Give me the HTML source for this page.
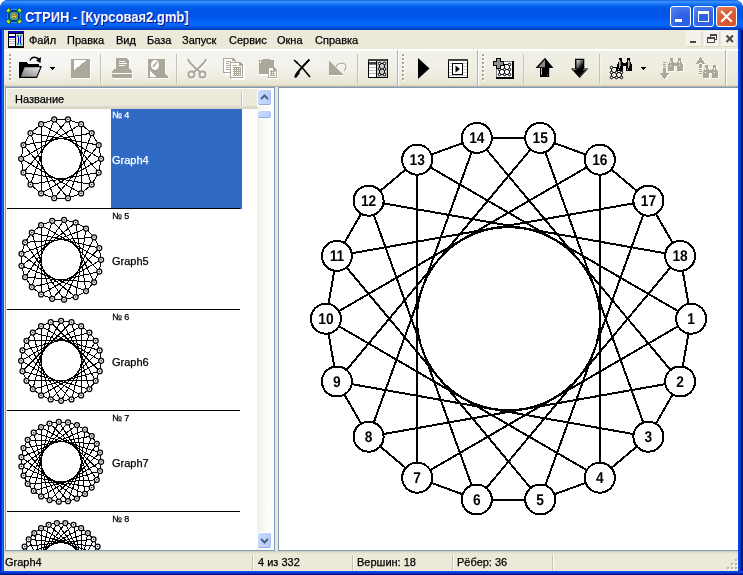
<!DOCTYPE html>
<html><head><meta charset="utf-8">
<style>
*{margin:0;padding:0;box-sizing:border-box}
html,body{width:743px;height:575px;overflow:hidden;background:#fff}
body{position:relative;font-family:"Liberation Sans",sans-serif;font-size:11px;color:#000}
.abs{position:absolute}
.mi,.st,.nm,.num,.ht,#titletext{will-change:transform}
.mi,.st,.nm,.num,.ht{-webkit-text-stroke:0.25px currentColor}
#right svg{will-change:transform}
#win{position:absolute;left:0;top:0;width:743px;height:575px;background:#0831d9;border-radius:8px 8px 0 0;overflow:hidden}
#title{position:absolute;left:0;top:0;width:743px;height:30px;border-radius:8px 8px 0 0;
background:linear-gradient(to bottom,#0a5ae0 0px,#2f86f6 1px,#3b90fa 2px,#1f7af4 3.5px,#0d6cf2 5px,#0360ee 6px,#0058e8 8px,#0055e5 12px,#0056e8 17px,#035ef2 20px,#0668fc 23px,#0565f8 25px,#045cec 26.5px,#0350dc 27.5px,#0242c8 28.5px,#0138b4 30px)}
#titletext{position:absolute;left:25px;top:9px;color:#fff;font-weight:bold;font-size:14.5px;transform:scaleX(0.897);transform-origin:0 0;text-shadow:1px 1px #0f1089;white-space:nowrap}
#client{position:absolute;left:4px;top:30px;width:734px;height:541px;background:#ece9d8}
#bl{position:absolute;left:0;top:30px;width:4px;height:545px;background:linear-gradient(to right,#0019cf 0,#0019cf 1px,#0831d9 1px,#0831d9 2px,#166aee 2px,#166aee 3px,#0855dd 3px)}
#br{position:absolute;left:738px;top:30px;width:5px;height:545px;background:linear-gradient(to right,#0a48ea 0,#0a48ea 1px,#0643dc 1px,#0643dc 2px,#0230b8 2px,#0230b8 3px,#00138c 3px)}
#bb{position:absolute;left:0;top:571px;width:743px;height:4px;background:linear-gradient(to bottom,#0a48ea 0,#0a48ea 1px,#0640d8 1px,#0640d8 2px,#0028b0 2px,#0028b0 3px,#001590 3px)}
#menubar{position:absolute;left:0;top:0;width:734px;height:20px;background:#ece9d8}
.mi{position:absolute;top:4px;font-size:11px;white-space:nowrap}
#toolbar{position:absolute;left:0;top:21px;width:734px;height:36px;background:linear-gradient(to bottom,#f0efe4 0px,#efede0 18px,#ebe7d6 29px,#e8e4d1 33px,#e2decb 34px,#dad5c1 35px,#b6af9a 35px,#b6af9a 36px)}
#tbov{position:absolute;left:0;top:0;width:734px;height:36px;background:linear-gradient(to right,rgba(247,247,248,0.85) 0%,rgba(247,247,248,0.42) 45%,rgba(247,247,248,0) 85%);-webkit-mask-image:linear-gradient(to bottom,#000 0%,#000 35%,rgba(0,0,0,0.25) 85%,rgba(0,0,0,0) 100%);mask-image:linear-gradient(to bottom,#000 0%,#000 35%,rgba(0,0,0,0.25) 85%,rgba(0,0,0,0) 100%)}
#mline{position:absolute;left:0;top:19px;width:734px;height:2px;background:#fff}
.sep{position:absolute;top:3px;width:2px;height:30px;border-left:1px solid #c5c2b2;border-right:1px solid rgba(255,255,255,0.35)}
.band{position:absolute;top:-1px;width:2px;height:36px;border-left:1px solid #b5b19e;border-right:1px solid #fff}
.cb{position:absolute;top:6px;width:21px;height:21px;border:1px solid #fff;border-radius:3px;background:radial-gradient(circle at 70% 80%,#2a5fe8 0%,#2f63e6 40%,#5a86f0 100%);box-shadow:inset 0 0 0 0 #fff}
.cb.cx{background:radial-gradient(circle at 70% 80%,#d8542c 0%,#dc5a35 50%,#e88a6a 100%)}
.mb{position:absolute;top:1px;width:16px;height:16px;background:#f4f2e8;border:1px solid #f8f7f1;border-right-color:#dcd9c9;border-bottom-color:#dcd9c9}
.sb{position:absolute;background:linear-gradient(to right,#c9d9fd 0%,#c1d3fc 60%,#b8cbf8 100%);border-radius:2px;border-bottom:1px solid #8fa9e0;border-right:1px solid #a9bff2;box-shadow:0 0 0 1px #fff}
.grip{position:absolute;top:3px;width:3px;height:27px;background:repeating-linear-gradient(to bottom,#aaa796 0,#aaa796 2px,transparent 2px,transparent 4px) 0 0/2px 26px no-repeat,repeating-linear-gradient(to bottom,#fff 0,#fff 2px,transparent 2px,transparent 4px) 1px 1px/2px 26px no-repeat}
#left{position:absolute;left:1px;top:57px;width:270px;height:464px;border:1px solid #7f9db9;background:#fff}
#right{position:absolute;left:274px;top:57px;width:460px;height:464px;border:1px solid #7f9db9;border-right:none;background:#fff}
#hdr{position:absolute;left:1px;top:1px;width:250px;height:20px;background:linear-gradient(to bottom,#ebeadb 0%,#ebeadb 80%,#e0ddcd 88%,#d1cfbe 100%)}
#status{position:absolute;left:0;top:521px;width:734px;height:20px;background:linear-gradient(to bottom,#c9c6b4 0,#dcd9c7 1px,#e6e3d2 2px,#ebe8d7 3px,#ece9d8 4px)}
.st{position:absolute;top:5px;font-size:11px;white-space:nowrap}
.ssep{position:absolute;top:4px;width:2px;height:15px;border-left:1px solid #c5c2b2;border-right:1px solid #fff}
.item{position:absolute;left:1px;width:235px;height:101px}
.item .line{position:absolute;left:0;bottom:0;width:233px;height:1px;background:#000}
.item .num{position:absolute;left:105px;top:2px;font-size:9px;white-space:nowrap}
.item .nm{position:absolute;left:105px;top:46px;font-size:11px;white-space:nowrap}
.sel{position:absolute;left:104px;top:0;width:131px;height:101px;background:#316ac5}
svg{position:absolute;overflow:visible}
svg text{font-family:"Liberation Sans",sans-serif;font-weight:bold;font-size:16px;text-rendering:geometricPrecision}
</style></head><body>
<div id="win">
<div id="title">
<svg width="16" height="16" style="left:6px;top:8px" viewBox="0 0 16 16">
<path d="M5 1.500h6l3.500 3.500v6l-3.500 3.500h-6l-3.500 -3.500v-6z" fill="#1830b0" stroke="#18a0c0" stroke-width="0.900"/>
<path d="M5.700 3.500h4.600l2.200 2.200v4.600l-2.200 2.200h-4.600l-2.200 -2.200v-4.600z" fill="#20b8c8" stroke="#0c1c80" stroke-width="0.800"/>
<circle cx="8" cy="8" r="3" fill="#e0c848" stroke="#6a5a18" stroke-width="0.700"/>
<rect x="6.500" y="6.600" width="1" height="1.200" fill="#303020"/><rect x="8.600" y="6.600" width="1" height="1.200" fill="#303020"/><rect x="7.200" y="9" width="1.700" height="1" fill="#705020"/>
<g transform="translate(2.700 2.700)"><path d="M0 -2.700L2.700 0L0 2.700L-2.700 0z" fill="#28e038" stroke="#202808" stroke-width="0.800"/><path d="M0 -2.300L-2.300 0L-1.150 1.150L1.150 -1.150z" fill="#f0e050"/></g><g transform="translate(13.300 2.700) rotate(90)"><path d="M0 -2.700L2.700 0L0 2.700L-2.700 0z" fill="#28e038" stroke="#202808" stroke-width="0.800"/><path d="M0 -2.300L-2.300 0L-1.150 1.150L1.150 -1.150z" fill="#f0e050"/></g><g transform="translate(13.300 13.300) rotate(180)"><path d="M0 -2.700L2.700 0L0 2.700L-2.700 0z" fill="#28e038" stroke="#202808" stroke-width="0.800"/><path d="M0 -2.300L-2.300 0L-1.150 1.150L1.150 -1.150z" fill="#f0e050"/></g><g transform="translate(2.700 13.300) rotate(270)"><path d="M0 -2.700L2.700 0L0 2.700L-2.700 0z" fill="#28e038" stroke="#202808" stroke-width="0.800"/><path d="M0 -2.300L-2.300 0L-1.150 1.150L1.150 -1.150z" fill="#f0e050"/></g>
</svg>

<div id="titletext">СТРИН - [Курсовая2.gmb]</div>
<div class="cb" style="left:670px"><div class="abs" style="left:4px;top:12px;width:7px;height:3px;background:#fff"></div></div>
<div class="cb" style="left:693px"><div class="abs" style="left:4px;top:4px;width:11px;height:11px;border:1px solid #fff;border-top:3px solid #fff"></div></div>
<div class="cb cx" style="left:716px"><svg width="19" height="19" style="left:0;top:0"><path d="M5 5l9 9M14 5l-9 9" stroke="#fff" stroke-width="2.200" stroke-linecap="square"/></svg></div>

</div>
<div id="bl"></div><div id="br"></div>
<div id="client">
<div id="menubar">
<svg width="16" height="17" style="left:4px;top:1px" viewBox="0 0 16 17" shape-rendering="crispEdges">
<rect x="0" y="0" width="16" height="17" fill="#000"/>
<rect x="0" y="0" width="16" height="2" fill="#0000c0"/>
<rect x="1" y="3" width="6" height="12" fill="#fff"/>
<rect x="1" y="5" width="6" height="2" fill="#0000c0"/>
<path d="M1 8h6v1h-6zM1 10h6v1h-6zM1 12h6v1h-6z" fill="#c0c0c0"/>
<rect x="8" y="3" width="7" height="12" fill="#e0dcc8"/>
<rect x="10" y="5" width="1" height="8" fill="#0000c0"/><rect x="12" y="5" width="1" height="8" fill="#0000c0"/>
<rect x="9" y="4" width="5" height="2" fill="#00a0c0"/><rect x="9" y="12" width="5" height="2" fill="#00a0c0"/>
<rect x="11" y="4" width="1" height="2" fill="#e0dcc8"/><rect x="11" y="12" width="1" height="2" fill="#e0dcc8"/>
</svg>

<div class="mi" style="left:25px">Файл</div>
<div class="mi" style="left:63px">Правка</div>
<div class="mi" style="left:112px">Вид</div>
<div class="mi" style="left:143px">База</div>
<div class="mi" style="left:178px">Запуск</div>
<div class="mi" style="left:225px">Сервис</div>
<div class="mi" style="left:273px">Окна</div>
<div class="mi" style="left:311px">Справка</div>
<div class="mb" style="left:682px"><div class="abs" style="left:3px;top:9px;width:6px;height:2px;background:#484848"></div></div>
<div class="mb" style="left:700px"><div class="abs" style="left:5px;top:2px;width:7px;height:6px;border:1px solid #484848;border-top-width:2px"></div><div class="abs" style="left:2px;top:5px;width:8px;height:6px;border:1px solid #484848;border-top-width:2px;background:#f4f2e8"></div></div>
<div class="mb" style="left:718px"><svg width="16" height="16" style="left:-1px;top:-1px"><path d="M4.500 4.500l6.500 6.500M11 4.500l-6.500 6.500" stroke="#484848" stroke-width="2"/></svg></div>

</div>
<div id="mline"></div>
<div id="toolbar">
<div id="tbov"></div>
<div class="grip" style="left:5px"></div>
<div class="sep" style="left:96px"></div>
<div class="sep" style="left:172px"></div>
<div class="sep" style="left:353px"></div>
<div class="band" style="left:393px"></div>
<div class="grip" style="left:398px"></div>
<div class="band" style="left:473px"></div>
<div class="grip" style="left:478px"></div>
<div class="sep" style="left:519px"></div>
<div class="sep" style="left:595px"></div>
<div class="band" style="left:721px"></div>
<svg width="735" height="36" style="left:0;top:0" viewBox="4 51 735 36">
<g shape-rendering="crispEdges">
<!-- open folder -->
<defs><linearGradient id="fg" x1="0" y1="1" x2="1" y2="0"><stop offset="0" stop-color="#7c7c7c"/><stop offset="0.5" stop-color="#b4b4b4"/><stop offset="1" stop-color="#ececec"/></linearGradient></defs>
<path d="M19 62h7l2 2h11v3h-15l-4 11h-1z" fill="#000"/>
<path d="M23.500 66h18.500l-5 12H19z" fill="#000" shape-rendering="auto"/>
<path d="M24.700 67.300h15.500l-3.800 9.500H20.800z" fill="url(#fg)" shape-rendering="auto"/>
<path d="M30 60.500c1.500-4 6.500-4.500 9.500-0.500" fill="none" stroke="#000" stroke-width="1.300" shape-rendering="auto"/>
<path d="M36 60.500l5-3.500l-0.500 6z" fill="#000" shape-rendering="auto"/>
<path d="M50 67h5v1h-5zM51 68h3v1h-3zM52 69h1v1h-1z" fill="#000"/>
<!-- save disabled -->
<rect x="72" y="60" width="19" height="19" fill="#fff"/>
<rect x="71" y="59" width="19" height="19" fill="#aca899"/>
<path d="M74 60h13l-13 10z" fill="#fff"/>
<!-- print disabled -->
<g fill="#fff" transform="translate(1,1)"><path d="M116 58h10l3 3v8h-13zM114 69h17l1 3v1h-20v-1zM112 74h20v3l-1 1h-18l-1-1z"/></g>
<path d="M116 58h10l3 3v8h-13z" fill="#aca899"/>
<path d="M119 61h6v1h-6zM119 63h8v1h-8zM119 65h6v1h-6z" fill="#fff"/>
<path d="M114 69h17l1 3v1h-20v-1zM112 74h20v3l-1 1h-18l-1-1z" fill="#aca899"/>
<!-- preview disabled -->
<g fill="#fff" transform="translate(1,1)"><path d="M148 59h17v14l3 4v1h-20z"/></g>
<path d="M148 59h17v14l3 4v1h-20z" fill="#aca899"/>
<ellipse cx="155" cy="65" rx="4" ry="5" fill="#fff" shape-rendering="auto"/>
<path d="M153 67l4-5" stroke="#aca899" stroke-width="1.6" shape-rendering="auto"/>
<path d="M150 70l6 7h-6z" fill="#fff"/>
</g>
<!-- scissors disabled -->
<g shape-rendering="auto" fill="none">
<g stroke="#fff" transform="translate(1,1)" stroke-width="2"><path d="M188 59c1 4 6 8 12 13M206 59c-1 4-6 8-12 13"/><ellipse cx="191.500" cy="74.500" rx="3" ry="3"/><ellipse cx="202.500" cy="74.500" rx="3" ry="3"/></g>
<g stroke="#aca899" stroke-width="2"><path d="M188 59c1 4 6 8 12 13M206 59c-1 4-6 8-12 13"/><ellipse cx="191.500" cy="74.500" rx="3" ry="3"/><ellipse cx="202.500" cy="74.500" rx="3" ry="3"/></g>
</g>
<g shape-rendering="crispEdges">
<!-- copy disabled -->
<path d="M224 59h10l3 3v12h-13z" fill="#fff" transform="translate(1,1)"/>
<path d="M231 63h10l3 3v13h-13z" fill="#fff" transform="translate(1,1)"/>
<path d="M223 58h10l3 3v12h-13z" fill="#aca899"/>
<path d="M224 59h8v2h3v11h-11z" fill="#fff"/>
<path d="M226 61h5v1h-5zM226 63h3v1h-3zM226 65h4v1h-4zM226 67h3v1h-3zM226 69h4v1h-4z" fill="#aca899"/>
<path d="M230 62h10l3 3v13h-13z" fill="#aca899"/>
<path d="M231 63h8v3h3v11h-11z" fill="#fff"/>
<path d="M233 65h4v1h-4zM233 67h8v1h-8zM233 69h8v1h-8zM233 71h8v1h-8zM233 73h8v1h-8zM233 75h8v1h-8z" fill="#aca899"/>
<path d="M234 67h1v9h-1zM236 67h1v9h-1zM238 67h1v9h-1zM240 67h1v9h-1z" fill="#aca899"/>
<!-- paste disabled -->
<path d="M259 61h15v14h-15z" fill="#fff" transform="translate(1,1)"/>
<path d="M259 60h4v-1h7v1h4v14h-15z" fill="#aca899"/>
<path d="M260 61h1v2h-1z" fill="#fff"/>
<path d="M268 67h7l3 3v9h-10z" fill="#fff"/>
<path d="M268 67h6l3 3v8h-9z" fill="#aca899"/>
<path d="M269 68h4v3h3v6h-7z" fill="#fff"/>
<path d="M270 71h5v1h-5zM270 73h5v1h-5zM270 75h5v1h-5zM271 70h1v6h-1zM273 71h1v5h-1z" fill="#aca899"/>
</g>
<!-- delete X -->
<g shape-rendering="auto">
<path d="M294 60c5 4 11 10 16 17" stroke="#000" stroke-width="1.6" fill="none"/>
<path d="M309.500 59.500c-5 5-10 10-14 16" stroke="#000" stroke-width="2" fill="none"/>
<path d="M298 71l-4 6 2 1 4-5z" fill="#000"/>
<path d="M294 60l4 2-1 2z" fill="#000"/>
</g>
<!-- undo disabled -->
<g shape-rendering="crispEdges">
<path d="M330 62l14 14h-14z" fill="#fff"/>
<path d="M329 61l14 14h-14z" fill="#aca899"/>
</g>
<path d="M336 67c2-5 10-5 10 0c0 2-1 3-2 4" stroke="#fff" stroke-width="1.2" fill="none" transform="translate(1,1)"/>
<path d="M336 67c2-5 10-5 10 0c0 2-1 3-2 4" stroke="#aca899" stroke-width="1.200" fill="none"/>
<g shape-rendering="crispEdges">
<!-- table/graph icon -->
<rect x="368" y="59" width="20" height="19" fill="#000"/>
<rect x="368" y="59" width="19" height="2" fill="#404040"/>
<rect x="369" y="61" width="7" height="16" fill="#fff"/>
<rect x="369" y="62" width="7" height="2" fill="#404040"/>
<rect x="369" y="64" width="7" height="1" fill="#808080"/>
<path d="M369 67h7v1h-7zM369 70h7v1h-7zM369 73h7v1h-7z" fill="#c0c0c0"/>
<rect x="377" y="61" width="10" height="16" fill="#c8c8c8"/>
</g>
<g stroke="#000" stroke-width="1" fill="#fff"><path d="M379.500 63.500h5v11h-5zM379.500 69h5" fill="none"/><circle cx="379.500" cy="63.500" r="1.300"/><circle cx="384.500" cy="63.500" r="1.300"/><circle cx="379.500" cy="69" r="1.300"/><circle cx="384.500" cy="69" r="1.300"/><circle cx="379.500" cy="74.500" r="1.300"/><circle cx="384.500" cy="74.500" r="1.300"/></g>
<!-- play -->
<path d="M418 58v21l11.500-10.500z" fill="#000"/>
<g shape-rendering="crispEdges">
<!-- run window -->
<rect x="448" y="59" width="20" height="19" fill="#000"/>
<rect x="448" y="59" width="20" height="2" fill="#404040"/>
<rect x="449" y="61" width="18" height="16" fill="#fff"/>
<path d="M449 63h18v1h-18zM449 66h18v1h-18zM449 69h18v1h-18zM449 72h18v1h-18zM449 75h18v1h-18z" fill="#c8c8c8"/>
<rect x="452" y="63" width="11" height="12" fill="#000"/>
<rect x="453" y="64" width="9" height="10" fill="#fff"/>
<path d="M455.500 65.500v7l4.500-3.500z" fill="#000" shape-rendering="auto"/>
<!-- add graph -->
<rect x="496" y="61" width="18" height="18" fill="#000"/>
<rect x="496" y="61" width="16" height="16" fill="#fff"/>
<rect x="496" y="61" width="1" height="16" fill="#808080"/><rect x="496" y="61" width="16" height="1" fill="#808080"/>
</g>
<g stroke="#000" stroke-width="1" fill="#fff"><path d="M499.500 64.500h10v10h-10zM504.500 64.500v10M499.500 69.500h10" fill="none"/>
<circle cx="509.500" cy="64.500" r="1.300"/><circle cx="509.500" cy="69.500" r="1.300"/><circle cx="499.500" cy="74.500" r="1.300"/><circle cx="504.500" cy="74.500" r="1.300"/><circle cx="509.500" cy="74.500" r="1.300"/><circle cx="504.500" cy="69.500" r="1.300"/><circle cx="499.500" cy="69.500" r="1.300"/></g>
<path d="M496.500 58.500h4v3h3v4h-3v3h-4v-3h-3v-4h3z" fill="#909088" stroke="#000" stroke-width="1" shape-rendering="crispEdges"/>
<!-- up arrow -->
<path d="M545 57.800l8.500 10.200h-4.300v9h-9.200v-9h-4.500z" fill="#000"/>
<path d="M545 59.500l-6.800 7.700h6.800z" fill="#868686"/>
<path d="M541.500 68v7" stroke="#b0b0b0" stroke-width="1" fill="none"/>
<rect x="547" y="74.500" width="1" height="1" fill="#999"/>
<!-- down arrow -->
<defs><linearGradient id="dg" x1="0" y1="0" x2="1" y2="1"><stop offset="0" stop-color="#e8e8e8"/><stop offset="0.45" stop-color="#707070"/><stop offset="0.8" stop-color="#000"/></linearGradient></defs>
<path d="M575 58.800h9.300v9.700h4l-8.700 9.500l-8.700-9.500h4.100z" fill="#000"/>
<rect x="576.500" y="60" width="6.500" height="8.500" fill="url(#dg)"/>
<path d="M573 69.700h3.500M583 69.700h3.500" stroke="#9a9a9a" stroke-width="0.900" fill="none"/>
<path d="M585 71l-5 5.500" stroke="#666" stroke-width="0.800" fill="none"/>
<!-- binoculars -->
<g stroke="#000" stroke-width="1" fill="#fff"><path d="M611.500 67.500h10v10h-10zM611.500 72.500h10M616.500 67.500v10" fill="none"/><circle cx="611.500" cy="67.500" r="1.300"/><circle cx="611.500" cy="72.500" r="1.300"/><circle cx="611.500" cy="77.500" r="1.300"/><circle cx="616.500" cy="77.500" r="1.300"/><circle cx="621.500" cy="77.500" r="1.300"/><circle cx="621.500" cy="72.500" r="1.300"/><circle cx="616.500" cy="72.500" r="1.300"/></g>
<g shape-rendering="crispEdges"><path transform="translate(617 58)" d="M2 0h3v4h1v9h-6v-7h1v-2h1zM13 0h-3v4h-1v9h6v-7h-1v-2h-1zM6 5h3v3h-3z" fill="#000"/><path d="M619 60h1v8h-1zM628 60h1v8h-1z" fill="#b8b8b8"/><path d="M620 61h1v5h-1zM629 61h1v5h-1z" fill="#707070"/><path d="M618 69h1v1h-1zM627 69h1v1h-1z" fill="#ddd"/></g>
<path d="M641 67h5v1h-5zM642 68h3v1h-3zM643 69h1v1h-1z" fill="#000" shape-rendering="crispEdges"/>
<!-- find down disabled -->
<g shape-rendering="crispEdges">
<path transform="translate(669 59)" d="M2 0h3v4h1v9h-6v-7h1v-2h1zM13 0h-3v4h-1v9h6v-7h-1v-2h-1zM6 5h3v3h-3z" fill="#fff"/>
<path transform="translate(668 58)" d="M2 0h3v4h1v9h-6v-7h1v-2h1zM13 0h-3v4h-1v9h6v-7h-1v-2h-1zM6 5h3v3h-3z" fill="#aca899"/>
<path d="M670 61h1v2h-1zM679 61h1v2h-1zM670 65h1v1h-1zM679 65h1v1h-1z" fill="#fff"/>
<g fill="#fff" transform="translate(1,1)"><path d="M663 68h3v5h-3zM660 73h9l-4.500 6.500z"/></g>
<g fill="#aca899"><path d="M663 68h3v5h-3zM663 66h3v1h-3zM663 64h3v1h-3zM663 62h3v1h-3zM660 73h9l-4.500 6.500z"/></g>
<!-- find up disabled -->
<path transform="translate(704 66)" d="M2 0h3v4h1v9h-6v-7h1v-2h1zM13 0h-3v4h-1v9h6v-7h-1v-2h-1zM6 5h3v3h-3z" fill="#fff"/>
<path transform="translate(703 65)" d="M2 0h3v4h1v9h-6v-7h1v-2h1zM13 0h-3v4h-1v9h6v-7h-1v-2h-1zM6 5h3v3h-3z" fill="#aca899"/>
<path d="M705 68h1v2h-1zM714 68h1v2h-1zM705 72h1v1h-1zM714 72h1v1h-1z" fill="#fff"/>
<g fill="#fff" transform="translate(1,1)"><path d="M699 63h3v5h-3zM696 63.500h9l-4.500-6.500z"/></g>
<g fill="#aca899"><path d="M699 63h3v5h-3zM699 69h3v1h-3zM699 71h3v1h-3zM699 73h3v1h-3zM696 63.500h9l-4.500-6.500z"/></g>
</g>
</svg>

</div>
<div id="left">
<div id="hdr"><div class="abs ht" style="left:8px;top:4px;font-size:11px">Название</div>
<div class="abs" style="left:234px;top:3px;width:2px;height:14px;border-left:1px solid #c5c2b2;border-right:1px solid #fff"></div></div>
<div class="abs" id="list" style="left:0;top:21px;width:251px;height:441px;overflow:hidden">
<div class="item" style="top:-1px"><div class="sel"></div><svg width="104" height="100" style="left:0;top:0" shape-rendering="crispEdges"><path d="M94.1 50.8L91.7 64.5M94.1 50.8L34.1 85.4M91.7 64.5L84.7 76.5M91.7 64.5L23.5 76.5M84.7 76.5L74.1 85.4M84.7 76.5L16.5 64.5M74.1 85.4L61.0 90.2M74.1 85.4L14.1 50.8M61.0 90.2L47.2 90.2M61.0 90.2L16.5 37.1M47.2 90.2L34.1 85.4M47.2 90.2L23.5 25.1M34.1 85.4L23.5 76.5M34.1 85.4L34.1 16.2M23.5 76.5L16.5 64.5M23.5 76.5L47.2 11.4M16.5 64.5L14.1 50.8M16.5 64.5L61.0 11.4M14.1 50.8L16.5 37.1M14.1 50.8L74.1 16.2M16.5 37.1L23.5 25.1M16.5 37.1L84.7 25.1M23.5 25.1L34.1 16.2M23.5 25.1L91.7 37.1M34.1 16.2L47.2 11.4M34.1 16.2L94.1 50.8M47.2 11.4L61.0 11.4M47.2 11.4L91.7 64.5M61.0 11.4L74.1 16.2M61.0 11.4L84.7 76.5M74.1 16.2L84.7 25.1M74.1 16.2L74.1 85.4M84.7 25.1L91.7 37.1M84.7 25.1L61.0 90.2M91.7 37.1L94.1 50.8M91.7 37.1L47.2 90.2" stroke="#000" stroke-width="1" fill="none"/>
<circle cx="54.1" cy="50.8" r="20.2" stroke="#000" stroke-width="1" fill="none"/>
<circle cx="94.1" cy="50.8" r="2.5" stroke="#000" stroke-width="1.25" fill="#fff" shape-rendering="geometricPrecision"/>
<circle cx="94.1" cy="50.8" r="0.8" fill="#333" shape-rendering="geometricPrecision"/>
<circle cx="91.7" cy="64.5" r="2.5" stroke="#000" stroke-width="1.25" fill="#fff" shape-rendering="geometricPrecision"/>
<circle cx="91.7" cy="64.5" r="0.8" fill="#333" shape-rendering="geometricPrecision"/>
<circle cx="84.7" cy="76.5" r="2.5" stroke="#000" stroke-width="1.25" fill="#fff" shape-rendering="geometricPrecision"/>
<circle cx="84.7" cy="76.5" r="0.8" fill="#333" shape-rendering="geometricPrecision"/>
<circle cx="74.1" cy="85.4" r="2.5" stroke="#000" stroke-width="1.25" fill="#fff" shape-rendering="geometricPrecision"/>
<circle cx="74.1" cy="85.4" r="0.8" fill="#333" shape-rendering="geometricPrecision"/>
<circle cx="61.0" cy="90.2" r="2.5" stroke="#000" stroke-width="1.25" fill="#fff" shape-rendering="geometricPrecision"/>
<circle cx="61.0" cy="90.2" r="0.8" fill="#333" shape-rendering="geometricPrecision"/>
<circle cx="47.2" cy="90.2" r="2.5" stroke="#000" stroke-width="1.25" fill="#fff" shape-rendering="geometricPrecision"/>
<circle cx="47.2" cy="90.2" r="0.8" fill="#333" shape-rendering="geometricPrecision"/>
<circle cx="34.1" cy="85.4" r="2.5" stroke="#000" stroke-width="1.25" fill="#fff" shape-rendering="geometricPrecision"/>
<circle cx="34.1" cy="85.4" r="0.8" fill="#333" shape-rendering="geometricPrecision"/>
<circle cx="23.5" cy="76.5" r="2.5" stroke="#000" stroke-width="1.25" fill="#fff" shape-rendering="geometricPrecision"/>
<circle cx="23.5" cy="76.5" r="0.8" fill="#333" shape-rendering="geometricPrecision"/>
<circle cx="16.5" cy="64.5" r="2.5" stroke="#000" stroke-width="1.25" fill="#fff" shape-rendering="geometricPrecision"/>
<circle cx="16.5" cy="64.5" r="0.8" fill="#333" shape-rendering="geometricPrecision"/>
<circle cx="14.1" cy="50.8" r="2.5" stroke="#000" stroke-width="1.25" fill="#fff" shape-rendering="geometricPrecision"/>
<circle cx="14.1" cy="50.8" r="0.8" fill="#333" shape-rendering="geometricPrecision"/>
<circle cx="16.5" cy="37.1" r="2.5" stroke="#000" stroke-width="1.25" fill="#fff" shape-rendering="geometricPrecision"/>
<circle cx="16.5" cy="37.1" r="0.8" fill="#333" shape-rendering="geometricPrecision"/>
<circle cx="23.5" cy="25.1" r="2.5" stroke="#000" stroke-width="1.25" fill="#fff" shape-rendering="geometricPrecision"/>
<circle cx="23.5" cy="25.1" r="0.8" fill="#333" shape-rendering="geometricPrecision"/>
<circle cx="34.1" cy="16.2" r="2.5" stroke="#000" stroke-width="1.25" fill="#fff" shape-rendering="geometricPrecision"/>
<circle cx="34.1" cy="16.2" r="0.8" fill="#333" shape-rendering="geometricPrecision"/>
<circle cx="47.2" cy="11.4" r="2.5" stroke="#000" stroke-width="1.25" fill="#fff" shape-rendering="geometricPrecision"/>
<circle cx="47.2" cy="11.4" r="0.8" fill="#333" shape-rendering="geometricPrecision"/>
<circle cx="61.0" cy="11.4" r="2.5" stroke="#000" stroke-width="1.25" fill="#fff" shape-rendering="geometricPrecision"/>
<circle cx="61.0" cy="11.4" r="0.8" fill="#333" shape-rendering="geometricPrecision"/>
<circle cx="74.1" cy="16.2" r="2.5" stroke="#000" stroke-width="1.25" fill="#fff" shape-rendering="geometricPrecision"/>
<circle cx="74.1" cy="16.2" r="0.8" fill="#333" shape-rendering="geometricPrecision"/>
<circle cx="84.7" cy="25.1" r="2.5" stroke="#000" stroke-width="1.25" fill="#fff" shape-rendering="geometricPrecision"/>
<circle cx="84.7" cy="25.1" r="0.8" fill="#333" shape-rendering="geometricPrecision"/>
<circle cx="91.7" cy="37.1" r="2.5" stroke="#000" stroke-width="1.25" fill="#fff" shape-rendering="geometricPrecision"/>
<circle cx="91.7" cy="37.1" r="0.8" fill="#333" shape-rendering="geometricPrecision"/></svg><div class="num" style="color:#fff">№ 4</div><div class="nm" style="color:#fff">Graph4</div><div class="line"></div></div>
<div class="item" style="top:100px"><svg width="104" height="100" style="left:0;top:0" shape-rendering="crispEdges"><path d="M94.1 50.8L92.3 62.6M94.1 50.8L34.1 85.4M92.3 62.6L87.1 73.3M92.3 62.6L24.8 78.0M87.1 73.3L79.0 82.1M87.1 73.3L18.1 68.2M79.0 82.1L68.7 88.0M79.0 82.1L14.5 56.8M68.7 88.0L57.1 90.7M68.7 88.0L14.5 44.8M57.1 90.7L45.2 89.8M57.1 90.7L18.1 33.4M45.2 89.8L34.1 85.4M45.2 89.8L24.8 23.6M34.1 85.4L24.8 78.0M34.1 85.4L34.1 16.2M24.8 78.0L18.1 68.2M24.8 78.0L45.2 11.8M18.1 68.2L14.5 56.8M18.1 68.2L57.1 10.9M14.5 56.8L14.5 44.8M14.5 56.8L68.7 13.6M14.5 44.8L18.1 33.4M14.5 44.8L79.0 19.5M18.1 33.4L24.8 23.6M18.1 33.4L87.1 28.3M24.8 23.6L34.1 16.2M24.8 23.6L92.3 39.0M34.1 16.2L45.2 11.8M34.1 16.2L94.1 50.8M45.2 11.8L57.1 10.9M45.2 11.8L92.3 62.6M57.1 10.9L68.7 13.6M57.1 10.9L87.1 73.3M68.7 13.6L79.0 19.5M68.7 13.6L79.0 82.1M79.0 19.5L87.1 28.3M79.0 19.5L68.7 88.0M87.1 28.3L92.3 39.0M87.1 28.3L57.1 90.7M92.3 39.0L94.1 50.8M92.3 39.0L45.2 89.8" stroke="#000" stroke-width="1" fill="none"/>
<circle cx="54.1" cy="50.8" r="20.2" stroke="#000" stroke-width="1" fill="none"/>
<circle cx="94.1" cy="50.8" r="2.5" stroke="#000" stroke-width="1.25" fill="#fff" shape-rendering="geometricPrecision"/>
<circle cx="94.1" cy="50.8" r="0.8" fill="#333" shape-rendering="geometricPrecision"/>
<circle cx="92.3" cy="62.6" r="2.5" stroke="#000" stroke-width="1.25" fill="#fff" shape-rendering="geometricPrecision"/>
<circle cx="92.3" cy="62.6" r="0.8" fill="#333" shape-rendering="geometricPrecision"/>
<circle cx="87.1" cy="73.3" r="2.5" stroke="#000" stroke-width="1.25" fill="#fff" shape-rendering="geometricPrecision"/>
<circle cx="87.1" cy="73.3" r="0.8" fill="#333" shape-rendering="geometricPrecision"/>
<circle cx="79.0" cy="82.1" r="2.5" stroke="#000" stroke-width="1.25" fill="#fff" shape-rendering="geometricPrecision"/>
<circle cx="79.0" cy="82.1" r="0.8" fill="#333" shape-rendering="geometricPrecision"/>
<circle cx="68.7" cy="88.0" r="2.5" stroke="#000" stroke-width="1.25" fill="#fff" shape-rendering="geometricPrecision"/>
<circle cx="68.7" cy="88.0" r="0.8" fill="#333" shape-rendering="geometricPrecision"/>
<circle cx="57.1" cy="90.7" r="2.5" stroke="#000" stroke-width="1.25" fill="#fff" shape-rendering="geometricPrecision"/>
<circle cx="57.1" cy="90.7" r="0.8" fill="#333" shape-rendering="geometricPrecision"/>
<circle cx="45.2" cy="89.8" r="2.5" stroke="#000" stroke-width="1.25" fill="#fff" shape-rendering="geometricPrecision"/>
<circle cx="45.2" cy="89.8" r="0.8" fill="#333" shape-rendering="geometricPrecision"/>
<circle cx="34.1" cy="85.4" r="2.5" stroke="#000" stroke-width="1.25" fill="#fff" shape-rendering="geometricPrecision"/>
<circle cx="34.1" cy="85.4" r="0.8" fill="#333" shape-rendering="geometricPrecision"/>
<circle cx="24.8" cy="78.0" r="2.5" stroke="#000" stroke-width="1.25" fill="#fff" shape-rendering="geometricPrecision"/>
<circle cx="24.8" cy="78.0" r="0.8" fill="#333" shape-rendering="geometricPrecision"/>
<circle cx="18.1" cy="68.2" r="2.5" stroke="#000" stroke-width="1.25" fill="#fff" shape-rendering="geometricPrecision"/>
<circle cx="18.1" cy="68.2" r="0.8" fill="#333" shape-rendering="geometricPrecision"/>
<circle cx="14.5" cy="56.8" r="2.5" stroke="#000" stroke-width="1.25" fill="#fff" shape-rendering="geometricPrecision"/>
<circle cx="14.5" cy="56.8" r="0.8" fill="#333" shape-rendering="geometricPrecision"/>
<circle cx="14.5" cy="44.8" r="2.5" stroke="#000" stroke-width="1.25" fill="#fff" shape-rendering="geometricPrecision"/>
<circle cx="14.5" cy="44.8" r="0.8" fill="#333" shape-rendering="geometricPrecision"/>
<circle cx="18.1" cy="33.4" r="2.5" stroke="#000" stroke-width="1.25" fill="#fff" shape-rendering="geometricPrecision"/>
<circle cx="18.1" cy="33.4" r="0.8" fill="#333" shape-rendering="geometricPrecision"/>
<circle cx="24.8" cy="23.6" r="2.5" stroke="#000" stroke-width="1.25" fill="#fff" shape-rendering="geometricPrecision"/>
<circle cx="24.8" cy="23.6" r="0.8" fill="#333" shape-rendering="geometricPrecision"/>
<circle cx="34.1" cy="16.2" r="2.5" stroke="#000" stroke-width="1.25" fill="#fff" shape-rendering="geometricPrecision"/>
<circle cx="34.1" cy="16.2" r="0.8" fill="#333" shape-rendering="geometricPrecision"/>
<circle cx="45.2" cy="11.8" r="2.5" stroke="#000" stroke-width="1.25" fill="#fff" shape-rendering="geometricPrecision"/>
<circle cx="45.2" cy="11.8" r="0.8" fill="#333" shape-rendering="geometricPrecision"/>
<circle cx="57.1" cy="10.9" r="2.5" stroke="#000" stroke-width="1.25" fill="#fff" shape-rendering="geometricPrecision"/>
<circle cx="57.1" cy="10.9" r="0.8" fill="#333" shape-rendering="geometricPrecision"/>
<circle cx="68.7" cy="13.6" r="2.5" stroke="#000" stroke-width="1.25" fill="#fff" shape-rendering="geometricPrecision"/>
<circle cx="68.7" cy="13.6" r="0.8" fill="#333" shape-rendering="geometricPrecision"/>
<circle cx="79.0" cy="19.5" r="2.5" stroke="#000" stroke-width="1.25" fill="#fff" shape-rendering="geometricPrecision"/>
<circle cx="79.0" cy="19.5" r="0.8" fill="#333" shape-rendering="geometricPrecision"/>
<circle cx="87.1" cy="28.3" r="2.5" stroke="#000" stroke-width="1.25" fill="#fff" shape-rendering="geometricPrecision"/>
<circle cx="87.1" cy="28.3" r="0.8" fill="#333" shape-rendering="geometricPrecision"/>
<circle cx="92.3" cy="39.0" r="2.5" stroke="#000" stroke-width="1.25" fill="#fff" shape-rendering="geometricPrecision"/>
<circle cx="92.3" cy="39.0" r="0.8" fill="#333" shape-rendering="geometricPrecision"/></svg><div class="num" style="">№ 5</div><div class="nm" style="">Graph5</div><div class="line"></div></div>
<div class="item" style="top:201px"><svg width="104" height="100" style="left:0;top:0" shape-rendering="crispEdges"><path d="M94.1 50.8L92.7 61.2M94.1 50.8L34.1 85.4M92.7 61.2L88.7 70.8M92.7 61.2L25.8 79.1M88.7 70.8L82.4 79.1M88.7 70.8L19.5 70.8M82.4 79.1L74.1 85.4M82.4 79.1L15.5 61.2M74.1 85.4L64.5 89.4M74.1 85.4L14.1 50.8M64.5 89.4L54.1 90.8M64.5 89.4L15.5 40.4M54.1 90.8L43.7 89.4M54.1 90.8L19.5 30.8M43.7 89.4L34.1 85.4M43.7 89.4L25.8 22.5M34.1 85.4L25.8 79.1M34.1 85.4L34.1 16.2M25.8 79.1L19.5 70.8M25.8 79.1L43.7 12.2M19.5 70.8L15.5 61.2M19.5 70.8L54.1 10.8M15.5 61.2L14.1 50.8M15.5 61.2L64.5 12.2M14.1 50.8L15.5 40.4M14.1 50.8L74.1 16.2M15.5 40.4L19.5 30.8M15.5 40.4L82.4 22.5M19.5 30.8L25.8 22.5M19.5 30.8L88.7 30.8M25.8 22.5L34.1 16.2M25.8 22.5L92.7 40.4M34.1 16.2L43.7 12.2M34.1 16.2L94.1 50.8M43.7 12.2L54.1 10.8M43.7 12.2L92.7 61.2M54.1 10.8L64.5 12.2M54.1 10.8L88.7 70.8M64.5 12.2L74.1 16.2M64.5 12.2L82.4 79.1M74.1 16.2L82.4 22.5M74.1 16.2L74.1 85.4M82.4 22.5L88.7 30.8M82.4 22.5L64.5 89.4M88.7 30.8L92.7 40.4M88.7 30.8L54.1 90.8M92.7 40.4L94.1 50.8M92.7 40.4L43.7 89.4" stroke="#000" stroke-width="1" fill="none"/>
<circle cx="54.1" cy="50.8" r="20.2" stroke="#000" stroke-width="1" fill="none"/>
<circle cx="94.1" cy="50.8" r="2.5" stroke="#000" stroke-width="1.25" fill="#fff" shape-rendering="geometricPrecision"/>
<circle cx="94.1" cy="50.8" r="0.8" fill="#333" shape-rendering="geometricPrecision"/>
<circle cx="92.7" cy="61.2" r="2.5" stroke="#000" stroke-width="1.25" fill="#fff" shape-rendering="geometricPrecision"/>
<circle cx="92.7" cy="61.2" r="0.8" fill="#333" shape-rendering="geometricPrecision"/>
<circle cx="88.7" cy="70.8" r="2.5" stroke="#000" stroke-width="1.25" fill="#fff" shape-rendering="geometricPrecision"/>
<circle cx="88.7" cy="70.8" r="0.8" fill="#333" shape-rendering="geometricPrecision"/>
<circle cx="82.4" cy="79.1" r="2.5" stroke="#000" stroke-width="1.25" fill="#fff" shape-rendering="geometricPrecision"/>
<circle cx="82.4" cy="79.1" r="0.8" fill="#333" shape-rendering="geometricPrecision"/>
<circle cx="74.1" cy="85.4" r="2.5" stroke="#000" stroke-width="1.25" fill="#fff" shape-rendering="geometricPrecision"/>
<circle cx="74.1" cy="85.4" r="0.8" fill="#333" shape-rendering="geometricPrecision"/>
<circle cx="64.5" cy="89.4" r="2.5" stroke="#000" stroke-width="1.25" fill="#fff" shape-rendering="geometricPrecision"/>
<circle cx="64.5" cy="89.4" r="0.8" fill="#333" shape-rendering="geometricPrecision"/>
<circle cx="54.1" cy="90.8" r="2.5" stroke="#000" stroke-width="1.25" fill="#fff" shape-rendering="geometricPrecision"/>
<circle cx="54.1" cy="90.8" r="0.8" fill="#333" shape-rendering="geometricPrecision"/>
<circle cx="43.7" cy="89.4" r="2.5" stroke="#000" stroke-width="1.25" fill="#fff" shape-rendering="geometricPrecision"/>
<circle cx="43.7" cy="89.4" r="0.8" fill="#333" shape-rendering="geometricPrecision"/>
<circle cx="34.1" cy="85.4" r="2.5" stroke="#000" stroke-width="1.25" fill="#fff" shape-rendering="geometricPrecision"/>
<circle cx="34.1" cy="85.4" r="0.8" fill="#333" shape-rendering="geometricPrecision"/>
<circle cx="25.8" cy="79.1" r="2.5" stroke="#000" stroke-width="1.25" fill="#fff" shape-rendering="geometricPrecision"/>
<circle cx="25.8" cy="79.1" r="0.8" fill="#333" shape-rendering="geometricPrecision"/>
<circle cx="19.5" cy="70.8" r="2.5" stroke="#000" stroke-width="1.25" fill="#fff" shape-rendering="geometricPrecision"/>
<circle cx="19.5" cy="70.8" r="0.8" fill="#333" shape-rendering="geometricPrecision"/>
<circle cx="15.5" cy="61.2" r="2.5" stroke="#000" stroke-width="1.25" fill="#fff" shape-rendering="geometricPrecision"/>
<circle cx="15.5" cy="61.2" r="0.8" fill="#333" shape-rendering="geometricPrecision"/>
<circle cx="14.1" cy="50.8" r="2.5" stroke="#000" stroke-width="1.25" fill="#fff" shape-rendering="geometricPrecision"/>
<circle cx="14.1" cy="50.8" r="0.8" fill="#333" shape-rendering="geometricPrecision"/>
<circle cx="15.5" cy="40.4" r="2.5" stroke="#000" stroke-width="1.25" fill="#fff" shape-rendering="geometricPrecision"/>
<circle cx="15.5" cy="40.4" r="0.8" fill="#333" shape-rendering="geometricPrecision"/>
<circle cx="19.5" cy="30.8" r="2.5" stroke="#000" stroke-width="1.25" fill="#fff" shape-rendering="geometricPrecision"/>
<circle cx="19.5" cy="30.8" r="0.8" fill="#333" shape-rendering="geometricPrecision"/>
<circle cx="25.8" cy="22.5" r="2.5" stroke="#000" stroke-width="1.25" fill="#fff" shape-rendering="geometricPrecision"/>
<circle cx="25.8" cy="22.5" r="0.8" fill="#333" shape-rendering="geometricPrecision"/>
<circle cx="34.1" cy="16.2" r="2.5" stroke="#000" stroke-width="1.25" fill="#fff" shape-rendering="geometricPrecision"/>
<circle cx="34.1" cy="16.2" r="0.8" fill="#333" shape-rendering="geometricPrecision"/>
<circle cx="43.7" cy="12.2" r="2.5" stroke="#000" stroke-width="1.25" fill="#fff" shape-rendering="geometricPrecision"/>
<circle cx="43.7" cy="12.2" r="0.8" fill="#333" shape-rendering="geometricPrecision"/>
<circle cx="54.1" cy="10.8" r="2.5" stroke="#000" stroke-width="1.25" fill="#fff" shape-rendering="geometricPrecision"/>
<circle cx="54.1" cy="10.8" r="0.8" fill="#333" shape-rendering="geometricPrecision"/>
<circle cx="64.5" cy="12.2" r="2.5" stroke="#000" stroke-width="1.25" fill="#fff" shape-rendering="geometricPrecision"/>
<circle cx="64.5" cy="12.2" r="0.8" fill="#333" shape-rendering="geometricPrecision"/>
<circle cx="74.1" cy="16.2" r="2.5" stroke="#000" stroke-width="1.25" fill="#fff" shape-rendering="geometricPrecision"/>
<circle cx="74.1" cy="16.2" r="0.8" fill="#333" shape-rendering="geometricPrecision"/>
<circle cx="82.4" cy="22.5" r="2.5" stroke="#000" stroke-width="1.25" fill="#fff" shape-rendering="geometricPrecision"/>
<circle cx="82.4" cy="22.5" r="0.8" fill="#333" shape-rendering="geometricPrecision"/>
<circle cx="88.7" cy="30.8" r="2.5" stroke="#000" stroke-width="1.25" fill="#fff" shape-rendering="geometricPrecision"/>
<circle cx="88.7" cy="30.8" r="0.8" fill="#333" shape-rendering="geometricPrecision"/>
<circle cx="92.7" cy="40.4" r="2.5" stroke="#000" stroke-width="1.25" fill="#fff" shape-rendering="geometricPrecision"/>
<circle cx="92.7" cy="40.4" r="0.8" fill="#333" shape-rendering="geometricPrecision"/></svg><div class="num" style="">№ 6</div><div class="nm" style="">Graph6</div><div class="line"></div></div>
<div class="item" style="top:302px"><svg width="104" height="100" style="left:0;top:0" shape-rendering="crispEdges"><path d="M94.1 50.8L93.0 60.0M94.1 50.8L34.1 85.4M93.0 60.0L89.8 68.8M93.0 60.0L26.7 79.9M89.8 68.8L84.7 76.5M89.8 68.8L20.7 72.8M84.7 76.5L78.0 82.9M84.7 76.5L16.5 64.5M78.0 82.9L69.9 87.5M78.0 82.9L14.4 55.4M69.9 87.5L61.0 90.2M69.9 87.5L14.4 46.2M61.0 90.2L51.8 90.7M61.0 90.2L16.5 37.1M51.8 90.7L42.6 89.1M51.8 90.7L20.7 28.8M42.6 89.1L34.1 85.4M42.6 89.1L26.7 21.7M34.1 85.4L26.7 79.9M34.1 85.4L34.1 16.2M26.7 79.9L20.7 72.8M26.7 79.9L42.6 12.5M20.7 72.8L16.5 64.5M20.7 72.8L51.8 10.9M16.5 64.5L14.4 55.4M16.5 64.5L61.0 11.4M14.4 55.4L14.4 46.2M14.4 55.4L69.9 14.1M14.4 46.2L16.5 37.1M14.4 46.2L78.0 18.7M16.5 37.1L20.7 28.8M16.5 37.1L84.7 25.1M20.7 28.8L26.7 21.7M20.7 28.8L89.8 32.8M26.7 21.7L34.1 16.2M26.7 21.7L93.0 41.6M34.1 16.2L42.6 12.5M34.1 16.2L94.1 50.8M42.6 12.5L51.8 10.9M42.6 12.5L93.0 60.0M51.8 10.9L61.0 11.4M51.8 10.9L89.8 68.8M61.0 11.4L69.9 14.1M61.0 11.4L84.7 76.5M69.9 14.1L78.0 18.7M69.9 14.1L78.0 82.9M78.0 18.7L84.7 25.1M78.0 18.7L69.9 87.5M84.7 25.1L89.8 32.8M84.7 25.1L61.0 90.2M89.8 32.8L93.0 41.6M89.8 32.8L51.8 90.7M93.0 41.6L94.1 50.8M93.0 41.6L42.6 89.1" stroke="#000" stroke-width="1" fill="none"/>
<circle cx="54.1" cy="50.8" r="20.2" stroke="#000" stroke-width="1" fill="none"/>
<circle cx="94.1" cy="50.8" r="2.5" stroke="#000" stroke-width="1.25" fill="#fff" shape-rendering="geometricPrecision"/>
<circle cx="94.1" cy="50.8" r="0.8" fill="#333" shape-rendering="geometricPrecision"/>
<circle cx="93.0" cy="60.0" r="2.5" stroke="#000" stroke-width="1.25" fill="#fff" shape-rendering="geometricPrecision"/>
<circle cx="93.0" cy="60.0" r="0.8" fill="#333" shape-rendering="geometricPrecision"/>
<circle cx="89.8" cy="68.8" r="2.5" stroke="#000" stroke-width="1.25" fill="#fff" shape-rendering="geometricPrecision"/>
<circle cx="89.8" cy="68.8" r="0.8" fill="#333" shape-rendering="geometricPrecision"/>
<circle cx="84.7" cy="76.5" r="2.5" stroke="#000" stroke-width="1.25" fill="#fff" shape-rendering="geometricPrecision"/>
<circle cx="84.7" cy="76.5" r="0.8" fill="#333" shape-rendering="geometricPrecision"/>
<circle cx="78.0" cy="82.9" r="2.5" stroke="#000" stroke-width="1.25" fill="#fff" shape-rendering="geometricPrecision"/>
<circle cx="78.0" cy="82.9" r="0.8" fill="#333" shape-rendering="geometricPrecision"/>
<circle cx="69.9" cy="87.5" r="2.5" stroke="#000" stroke-width="1.25" fill="#fff" shape-rendering="geometricPrecision"/>
<circle cx="69.9" cy="87.5" r="0.8" fill="#333" shape-rendering="geometricPrecision"/>
<circle cx="61.0" cy="90.2" r="2.5" stroke="#000" stroke-width="1.25" fill="#fff" shape-rendering="geometricPrecision"/>
<circle cx="61.0" cy="90.2" r="0.8" fill="#333" shape-rendering="geometricPrecision"/>
<circle cx="51.8" cy="90.7" r="2.5" stroke="#000" stroke-width="1.25" fill="#fff" shape-rendering="geometricPrecision"/>
<circle cx="51.8" cy="90.7" r="0.8" fill="#333" shape-rendering="geometricPrecision"/>
<circle cx="42.6" cy="89.1" r="2.5" stroke="#000" stroke-width="1.25" fill="#fff" shape-rendering="geometricPrecision"/>
<circle cx="42.6" cy="89.1" r="0.8" fill="#333" shape-rendering="geometricPrecision"/>
<circle cx="34.1" cy="85.4" r="2.5" stroke="#000" stroke-width="1.25" fill="#fff" shape-rendering="geometricPrecision"/>
<circle cx="34.1" cy="85.4" r="0.8" fill="#333" shape-rendering="geometricPrecision"/>
<circle cx="26.7" cy="79.9" r="2.5" stroke="#000" stroke-width="1.25" fill="#fff" shape-rendering="geometricPrecision"/>
<circle cx="26.7" cy="79.9" r="0.8" fill="#333" shape-rendering="geometricPrecision"/>
<circle cx="20.7" cy="72.8" r="2.5" stroke="#000" stroke-width="1.25" fill="#fff" shape-rendering="geometricPrecision"/>
<circle cx="20.7" cy="72.8" r="0.8" fill="#333" shape-rendering="geometricPrecision"/>
<circle cx="16.5" cy="64.5" r="2.5" stroke="#000" stroke-width="1.25" fill="#fff" shape-rendering="geometricPrecision"/>
<circle cx="16.5" cy="64.5" r="0.8" fill="#333" shape-rendering="geometricPrecision"/>
<circle cx="14.4" cy="55.4" r="2.5" stroke="#000" stroke-width="1.25" fill="#fff" shape-rendering="geometricPrecision"/>
<circle cx="14.4" cy="55.4" r="0.8" fill="#333" shape-rendering="geometricPrecision"/>
<circle cx="14.4" cy="46.2" r="2.5" stroke="#000" stroke-width="1.25" fill="#fff" shape-rendering="geometricPrecision"/>
<circle cx="14.4" cy="46.2" r="0.8" fill="#333" shape-rendering="geometricPrecision"/>
<circle cx="16.5" cy="37.1" r="2.5" stroke="#000" stroke-width="1.25" fill="#fff" shape-rendering="geometricPrecision"/>
<circle cx="16.5" cy="37.1" r="0.8" fill="#333" shape-rendering="geometricPrecision"/>
<circle cx="20.7" cy="28.8" r="2.5" stroke="#000" stroke-width="1.25" fill="#fff" shape-rendering="geometricPrecision"/>
<circle cx="20.7" cy="28.8" r="0.8" fill="#333" shape-rendering="geometricPrecision"/>
<circle cx="26.7" cy="21.7" r="2.5" stroke="#000" stroke-width="1.25" fill="#fff" shape-rendering="geometricPrecision"/>
<circle cx="26.7" cy="21.7" r="0.8" fill="#333" shape-rendering="geometricPrecision"/>
<circle cx="34.1" cy="16.2" r="2.5" stroke="#000" stroke-width="1.25" fill="#fff" shape-rendering="geometricPrecision"/>
<circle cx="34.1" cy="16.2" r="0.8" fill="#333" shape-rendering="geometricPrecision"/>
<circle cx="42.6" cy="12.5" r="2.5" stroke="#000" stroke-width="1.25" fill="#fff" shape-rendering="geometricPrecision"/>
<circle cx="42.6" cy="12.5" r="0.8" fill="#333" shape-rendering="geometricPrecision"/>
<circle cx="51.8" cy="10.9" r="2.5" stroke="#000" stroke-width="1.25" fill="#fff" shape-rendering="geometricPrecision"/>
<circle cx="51.8" cy="10.9" r="0.8" fill="#333" shape-rendering="geometricPrecision"/>
<circle cx="61.0" cy="11.4" r="2.5" stroke="#000" stroke-width="1.25" fill="#fff" shape-rendering="geometricPrecision"/>
<circle cx="61.0" cy="11.4" r="0.8" fill="#333" shape-rendering="geometricPrecision"/>
<circle cx="69.9" cy="14.1" r="2.5" stroke="#000" stroke-width="1.25" fill="#fff" shape-rendering="geometricPrecision"/>
<circle cx="69.9" cy="14.1" r="0.8" fill="#333" shape-rendering="geometricPrecision"/>
<circle cx="78.0" cy="18.7" r="2.5" stroke="#000" stroke-width="1.25" fill="#fff" shape-rendering="geometricPrecision"/>
<circle cx="78.0" cy="18.7" r="0.8" fill="#333" shape-rendering="geometricPrecision"/>
<circle cx="84.7" cy="25.1" r="2.5" stroke="#000" stroke-width="1.25" fill="#fff" shape-rendering="geometricPrecision"/>
<circle cx="84.7" cy="25.1" r="0.8" fill="#333" shape-rendering="geometricPrecision"/>
<circle cx="89.8" cy="32.8" r="2.5" stroke="#000" stroke-width="1.25" fill="#fff" shape-rendering="geometricPrecision"/>
<circle cx="89.8" cy="32.8" r="0.8" fill="#333" shape-rendering="geometricPrecision"/>
<circle cx="93.0" cy="41.6" r="2.5" stroke="#000" stroke-width="1.25" fill="#fff" shape-rendering="geometricPrecision"/>
<circle cx="93.0" cy="41.6" r="0.8" fill="#333" shape-rendering="geometricPrecision"/></svg><div class="num" style="">№ 7</div><div class="nm" style="">Graph7</div><div class="line"></div></div>
<div class="item" style="top:403px"><svg width="104" height="100" style="left:0;top:0" shape-rendering="crispEdges"><path d="M94.1 50.8L93.2 59.1M94.1 50.8L34.1 85.4M93.2 59.1L90.6 67.1M93.2 59.1L27.3 80.5M90.6 67.1L86.5 74.3M90.6 67.1L21.7 74.3M86.5 74.3L80.9 80.5M86.5 74.3L17.6 67.1M80.9 80.5L74.1 85.4M80.9 80.5L15.0 59.1M74.1 85.4L66.5 88.8M74.1 85.4L14.1 50.8M66.5 88.8L58.3 90.6M66.5 88.8L15.0 42.5M58.3 90.6L49.9 90.6M58.3 90.6L17.6 34.5M49.9 90.6L41.7 88.8M49.9 90.6L21.7 27.3M41.7 88.8L34.1 85.4M41.7 88.8L27.3 21.1M34.1 85.4L27.3 80.5M34.1 85.4L34.1 16.2M27.3 80.5L21.7 74.3M27.3 80.5L41.7 12.8M21.7 74.3L17.6 67.1M21.7 74.3L49.9 11.0M17.6 67.1L15.0 59.1M17.6 67.1L58.3 11.0M15.0 59.1L14.1 50.8M15.0 59.1L66.5 12.8M14.1 50.8L15.0 42.5M14.1 50.8L74.1 16.2M15.0 42.5L17.6 34.5M15.0 42.5L80.9 21.1M17.6 34.5L21.7 27.3M17.6 34.5L86.5 27.3M21.7 27.3L27.3 21.1M21.7 27.3L90.6 34.5M27.3 21.1L34.1 16.2M27.3 21.1L93.2 42.5M34.1 16.2L41.7 12.8M34.1 16.2L94.1 50.8M41.7 12.8L49.9 11.0M41.7 12.8L93.2 59.1M49.9 11.0L58.3 11.0M49.9 11.0L90.6 67.1M58.3 11.0L66.5 12.8M58.3 11.0L86.5 74.3M66.5 12.8L74.1 16.2M66.5 12.8L80.9 80.5M74.1 16.2L80.9 21.1M74.1 16.2L74.1 85.4M80.9 21.1L86.5 27.3M80.9 21.1L66.5 88.8M86.5 27.3L90.6 34.5M86.5 27.3L58.3 90.6M90.6 34.5L93.2 42.5M90.6 34.5L49.9 90.6M93.2 42.5L94.1 50.8M93.2 42.5L41.7 88.8" stroke="#000" stroke-width="1" fill="none"/>
<circle cx="54.1" cy="50.8" r="20.2" stroke="#000" stroke-width="1" fill="none"/>
<circle cx="94.1" cy="50.8" r="2.5" stroke="#000" stroke-width="1.25" fill="#fff" shape-rendering="geometricPrecision"/>
<circle cx="94.1" cy="50.8" r="0.8" fill="#333" shape-rendering="geometricPrecision"/>
<circle cx="93.2" cy="59.1" r="2.5" stroke="#000" stroke-width="1.25" fill="#fff" shape-rendering="geometricPrecision"/>
<circle cx="93.2" cy="59.1" r="0.8" fill="#333" shape-rendering="geometricPrecision"/>
<circle cx="90.6" cy="67.1" r="2.5" stroke="#000" stroke-width="1.25" fill="#fff" shape-rendering="geometricPrecision"/>
<circle cx="90.6" cy="67.1" r="0.8" fill="#333" shape-rendering="geometricPrecision"/>
<circle cx="86.5" cy="74.3" r="2.5" stroke="#000" stroke-width="1.25" fill="#fff" shape-rendering="geometricPrecision"/>
<circle cx="86.5" cy="74.3" r="0.8" fill="#333" shape-rendering="geometricPrecision"/>
<circle cx="80.9" cy="80.5" r="2.5" stroke="#000" stroke-width="1.25" fill="#fff" shape-rendering="geometricPrecision"/>
<circle cx="80.9" cy="80.5" r="0.8" fill="#333" shape-rendering="geometricPrecision"/>
<circle cx="74.1" cy="85.4" r="2.5" stroke="#000" stroke-width="1.25" fill="#fff" shape-rendering="geometricPrecision"/>
<circle cx="74.1" cy="85.4" r="0.8" fill="#333" shape-rendering="geometricPrecision"/>
<circle cx="66.5" cy="88.8" r="2.5" stroke="#000" stroke-width="1.25" fill="#fff" shape-rendering="geometricPrecision"/>
<circle cx="66.5" cy="88.8" r="0.8" fill="#333" shape-rendering="geometricPrecision"/>
<circle cx="58.3" cy="90.6" r="2.5" stroke="#000" stroke-width="1.25" fill="#fff" shape-rendering="geometricPrecision"/>
<circle cx="58.3" cy="90.6" r="0.8" fill="#333" shape-rendering="geometricPrecision"/>
<circle cx="49.9" cy="90.6" r="2.5" stroke="#000" stroke-width="1.25" fill="#fff" shape-rendering="geometricPrecision"/>
<circle cx="49.9" cy="90.6" r="0.8" fill="#333" shape-rendering="geometricPrecision"/>
<circle cx="41.7" cy="88.8" r="2.5" stroke="#000" stroke-width="1.25" fill="#fff" shape-rendering="geometricPrecision"/>
<circle cx="41.7" cy="88.8" r="0.8" fill="#333" shape-rendering="geometricPrecision"/>
<circle cx="34.1" cy="85.4" r="2.5" stroke="#000" stroke-width="1.25" fill="#fff" shape-rendering="geometricPrecision"/>
<circle cx="34.1" cy="85.4" r="0.8" fill="#333" shape-rendering="geometricPrecision"/>
<circle cx="27.3" cy="80.5" r="2.5" stroke="#000" stroke-width="1.25" fill="#fff" shape-rendering="geometricPrecision"/>
<circle cx="27.3" cy="80.5" r="0.8" fill="#333" shape-rendering="geometricPrecision"/>
<circle cx="21.7" cy="74.3" r="2.5" stroke="#000" stroke-width="1.25" fill="#fff" shape-rendering="geometricPrecision"/>
<circle cx="21.7" cy="74.3" r="0.8" fill="#333" shape-rendering="geometricPrecision"/>
<circle cx="17.6" cy="67.1" r="2.5" stroke="#000" stroke-width="1.25" fill="#fff" shape-rendering="geometricPrecision"/>
<circle cx="17.6" cy="67.1" r="0.8" fill="#333" shape-rendering="geometricPrecision"/>
<circle cx="15.0" cy="59.1" r="2.5" stroke="#000" stroke-width="1.25" fill="#fff" shape-rendering="geometricPrecision"/>
<circle cx="15.0" cy="59.1" r="0.8" fill="#333" shape-rendering="geometricPrecision"/>
<circle cx="14.1" cy="50.8" r="2.5" stroke="#000" stroke-width="1.25" fill="#fff" shape-rendering="geometricPrecision"/>
<circle cx="14.1" cy="50.8" r="0.8" fill="#333" shape-rendering="geometricPrecision"/>
<circle cx="15.0" cy="42.5" r="2.5" stroke="#000" stroke-width="1.25" fill="#fff" shape-rendering="geometricPrecision"/>
<circle cx="15.0" cy="42.5" r="0.8" fill="#333" shape-rendering="geometricPrecision"/>
<circle cx="17.6" cy="34.5" r="2.5" stroke="#000" stroke-width="1.25" fill="#fff" shape-rendering="geometricPrecision"/>
<circle cx="17.6" cy="34.5" r="0.8" fill="#333" shape-rendering="geometricPrecision"/>
<circle cx="21.7" cy="27.3" r="2.5" stroke="#000" stroke-width="1.25" fill="#fff" shape-rendering="geometricPrecision"/>
<circle cx="21.7" cy="27.3" r="0.8" fill="#333" shape-rendering="geometricPrecision"/>
<circle cx="27.3" cy="21.1" r="2.5" stroke="#000" stroke-width="1.25" fill="#fff" shape-rendering="geometricPrecision"/>
<circle cx="27.3" cy="21.1" r="0.8" fill="#333" shape-rendering="geometricPrecision"/>
<circle cx="34.1" cy="16.2" r="2.5" stroke="#000" stroke-width="1.25" fill="#fff" shape-rendering="geometricPrecision"/>
<circle cx="34.1" cy="16.2" r="0.8" fill="#333" shape-rendering="geometricPrecision"/>
<circle cx="41.7" cy="12.8" r="2.5" stroke="#000" stroke-width="1.25" fill="#fff" shape-rendering="geometricPrecision"/>
<circle cx="41.7" cy="12.8" r="0.8" fill="#333" shape-rendering="geometricPrecision"/>
<circle cx="49.9" cy="11.0" r="2.5" stroke="#000" stroke-width="1.25" fill="#fff" shape-rendering="geometricPrecision"/>
<circle cx="49.9" cy="11.0" r="0.8" fill="#333" shape-rendering="geometricPrecision"/>
<circle cx="58.3" cy="11.0" r="2.5" stroke="#000" stroke-width="1.25" fill="#fff" shape-rendering="geometricPrecision"/>
<circle cx="58.3" cy="11.0" r="0.8" fill="#333" shape-rendering="geometricPrecision"/>
<circle cx="66.5" cy="12.8" r="2.5" stroke="#000" stroke-width="1.25" fill="#fff" shape-rendering="geometricPrecision"/>
<circle cx="66.5" cy="12.8" r="0.8" fill="#333" shape-rendering="geometricPrecision"/>
<circle cx="74.1" cy="16.2" r="2.5" stroke="#000" stroke-width="1.25" fill="#fff" shape-rendering="geometricPrecision"/>
<circle cx="74.1" cy="16.2" r="0.8" fill="#333" shape-rendering="geometricPrecision"/>
<circle cx="80.9" cy="21.1" r="2.5" stroke="#000" stroke-width="1.25" fill="#fff" shape-rendering="geometricPrecision"/>
<circle cx="80.9" cy="21.1" r="0.8" fill="#333" shape-rendering="geometricPrecision"/>
<circle cx="86.5" cy="27.3" r="2.5" stroke="#000" stroke-width="1.25" fill="#fff" shape-rendering="geometricPrecision"/>
<circle cx="86.5" cy="27.3" r="0.8" fill="#333" shape-rendering="geometricPrecision"/>
<circle cx="90.6" cy="34.5" r="2.5" stroke="#000" stroke-width="1.25" fill="#fff" shape-rendering="geometricPrecision"/>
<circle cx="90.6" cy="34.5" r="0.8" fill="#333" shape-rendering="geometricPrecision"/>
<circle cx="93.2" cy="42.5" r="2.5" stroke="#000" stroke-width="1.25" fill="#fff" shape-rendering="geometricPrecision"/>
<circle cx="93.2" cy="42.5" r="0.8" fill="#333" shape-rendering="geometricPrecision"/></svg><div class="num" style="">№ 8</div><div class="nm" style="">Graph8</div><div class="line"></div></div>
</div>
<div class="abs" style="left:251px;top:1px;width:16px;height:461px;background:linear-gradient(to right,#eeede5 0%,#f6f5f0 30%,#fdfdfb 70%,#fefefd 100%)">
<div class="sb" style="left:1px;top:1px;width:13px;height:15px"><svg width="13" height="15" style="left:0;top:0"><path d="M3 9L6.500 5.500L10 9" stroke="#4d6185" stroke-width="2" fill="none"/></svg></div>
<div class="sb" style="left:1px;top:22px;width:13px;height:7px"></div>
<div class="sb" style="left:1px;top:444px;width:13px;height:15px"><svg width="13" height="15" style="left:0;top:0"><path d="M3 6L6.500 9.500L10 6" stroke="#4d6185" stroke-width="2" fill="none"/></svg></div>
</div>

</div>
<div class="abs" style="left:271px;top:57px;width:3px;height:464px;background:#ece9d8"></div>
<div id="right">
<svg width="460" height="462" style="left:0;top:0" shape-rendering="crispEdges">
<path d="M412.1 230.7L401.1 293.5M412.1 230.7L138.2 389.7M401.1 293.5L369.4 348.7M401.1 293.5L89.6 348.7M369.4 348.7L320.8 389.7M369.4 348.7L57.9 293.5M320.8 389.7L261.2 411.5M320.8 389.7L46.9 230.7M261.2 411.5L197.8 411.5M261.2 411.5L57.9 167.9M197.8 411.5L138.2 389.7M197.8 411.5L89.6 112.7M138.2 389.7L89.6 348.7M138.2 389.7L138.2 71.7M89.6 348.7L57.9 293.5M89.6 348.7L197.8 49.9M57.9 293.5L46.9 230.7M57.9 293.5L261.2 49.9M46.9 230.7L57.9 167.9M46.9 230.7L320.8 71.7M57.9 167.9L89.6 112.7M57.9 167.9L369.4 112.7M89.6 112.7L138.2 71.7M89.6 112.7L401.1 167.9M138.2 71.7L197.8 49.9M138.2 71.7L412.1 230.7M197.8 49.9L261.2 49.9M197.8 49.9L401.1 293.5M261.2 49.9L320.8 71.7M261.2 49.9L369.4 348.7M320.8 71.7L369.4 112.7M320.8 71.7L320.8 389.7M369.4 112.7L401.1 167.9M369.4 112.7L261.2 411.5M401.1 167.9L412.1 230.7M401.1 167.9L197.8 411.5" stroke="#000" stroke-width="2" fill="none"/>
<circle cx="229.5" cy="230.7" r="91.5" stroke="#000" stroke-width="2" fill="none"/>
<circle cx="412.1" cy="230.7" r="15" stroke="#000" stroke-width="2" fill="#fff"/>
<text transform="translate(412.1 236.0) scale(0.86 0.97)" text-anchor="middle">1</text>
<circle cx="401.1" cy="293.5" r="15" stroke="#000" stroke-width="2" fill="#fff"/>
<text transform="translate(401.1 298.8) scale(0.86 0.97)" text-anchor="middle">2</text>
<circle cx="369.4" cy="348.7" r="15" stroke="#000" stroke-width="2" fill="#fff"/>
<text transform="translate(369.4 354.0) scale(0.86 0.97)" text-anchor="middle">3</text>
<circle cx="320.8" cy="389.7" r="15" stroke="#000" stroke-width="2" fill="#fff"/>
<text transform="translate(320.8 395.0) scale(0.86 0.97)" text-anchor="middle">4</text>
<circle cx="261.2" cy="411.5" r="15" stroke="#000" stroke-width="2" fill="#fff"/>
<text transform="translate(261.2 416.8) scale(0.86 0.97)" text-anchor="middle">5</text>
<circle cx="197.8" cy="411.5" r="15" stroke="#000" stroke-width="2" fill="#fff"/>
<text transform="translate(197.8 416.8) scale(0.86 0.97)" text-anchor="middle">6</text>
<circle cx="138.2" cy="389.7" r="15" stroke="#000" stroke-width="2" fill="#fff"/>
<text transform="translate(138.2 395.0) scale(0.86 0.97)" text-anchor="middle">7</text>
<circle cx="89.6" cy="348.7" r="15" stroke="#000" stroke-width="2" fill="#fff"/>
<text transform="translate(89.6 354.0) scale(0.86 0.97)" text-anchor="middle">8</text>
<circle cx="57.9" cy="293.5" r="15" stroke="#000" stroke-width="2" fill="#fff"/>
<text transform="translate(57.9 298.8) scale(0.86 0.97)" text-anchor="middle">9</text>
<circle cx="46.9" cy="230.7" r="15" stroke="#000" stroke-width="2" fill="#fff"/>
<text transform="translate(46.9 236.0) scale(0.86 0.97)" text-anchor="middle">10</text>
<circle cx="57.9" cy="167.9" r="15" stroke="#000" stroke-width="2" fill="#fff"/>
<text transform="translate(57.9 173.2) scale(0.86 0.97)" text-anchor="middle">11</text>
<circle cx="89.6" cy="112.7" r="15" stroke="#000" stroke-width="2" fill="#fff"/>
<text transform="translate(89.6 118.0) scale(0.86 0.97)" text-anchor="middle">12</text>
<circle cx="138.2" cy="71.7" r="15" stroke="#000" stroke-width="2" fill="#fff"/>
<text transform="translate(138.2 77.0) scale(0.86 0.97)" text-anchor="middle">13</text>
<circle cx="197.8" cy="49.9" r="15" stroke="#000" stroke-width="2" fill="#fff"/>
<text transform="translate(197.8 55.2) scale(0.86 0.97)" text-anchor="middle">14</text>
<circle cx="261.2" cy="49.9" r="15" stroke="#000" stroke-width="2" fill="#fff"/>
<text transform="translate(261.2 55.2) scale(0.86 0.97)" text-anchor="middle">15</text>
<circle cx="320.8" cy="71.7" r="15" stroke="#000" stroke-width="2" fill="#fff"/>
<text transform="translate(320.8 77.0) scale(0.86 0.97)" text-anchor="middle">16</text>
<circle cx="369.4" cy="112.7" r="15" stroke="#000" stroke-width="2" fill="#fff"/>
<text transform="translate(369.4 118.0) scale(0.86 0.97)" text-anchor="middle">17</text>
<circle cx="401.1" cy="167.9" r="15" stroke="#000" stroke-width="2" fill="#fff"/>
<text transform="translate(401.1 173.2) scale(0.86 0.97)" text-anchor="middle">18</text>
</svg>
</div>
<div id="status">
<div class="st" style="left:1px">Graph4</div>
<div class="ssep" style="left:248px"></div>
<div class="st" style="left:254px">4 из 332</div>
<div class="ssep" style="left:348px"></div>
<div class="st" style="left:353px">Вершин: 18</div>
<div class="ssep" style="left:448px"></div>
<div class="st" style="left:453px">Рёбер: 36</div>
<div class="ssep" style="left:548px"></div>
<svg width="13" height="13" style="left:722px;top:7px" shape-rendering="crispEdges">
<g fill="#fff"><rect x="10" y="2" width="2" height="2"/><rect x="6" y="6" width="2" height="2"/><rect x="10" y="6" width="2" height="2"/><rect x="2" y="10" width="2" height="2"/><rect x="6" y="10" width="2" height="2"/><rect x="10" y="10" width="2" height="2"/></g>
<g fill="#b8b4a4"><rect x="9" y="1" width="2" height="2"/><rect x="5" y="5" width="2" height="2"/><rect x="9" y="5" width="2" height="2"/><rect x="1" y="9" width="2" height="2"/><rect x="5" y="9" width="2" height="2"/><rect x="9" y="9" width="2" height="2"/></g>
</svg>

</div>
</div>
<div id="bb"></div>
</div>
</body></html>
